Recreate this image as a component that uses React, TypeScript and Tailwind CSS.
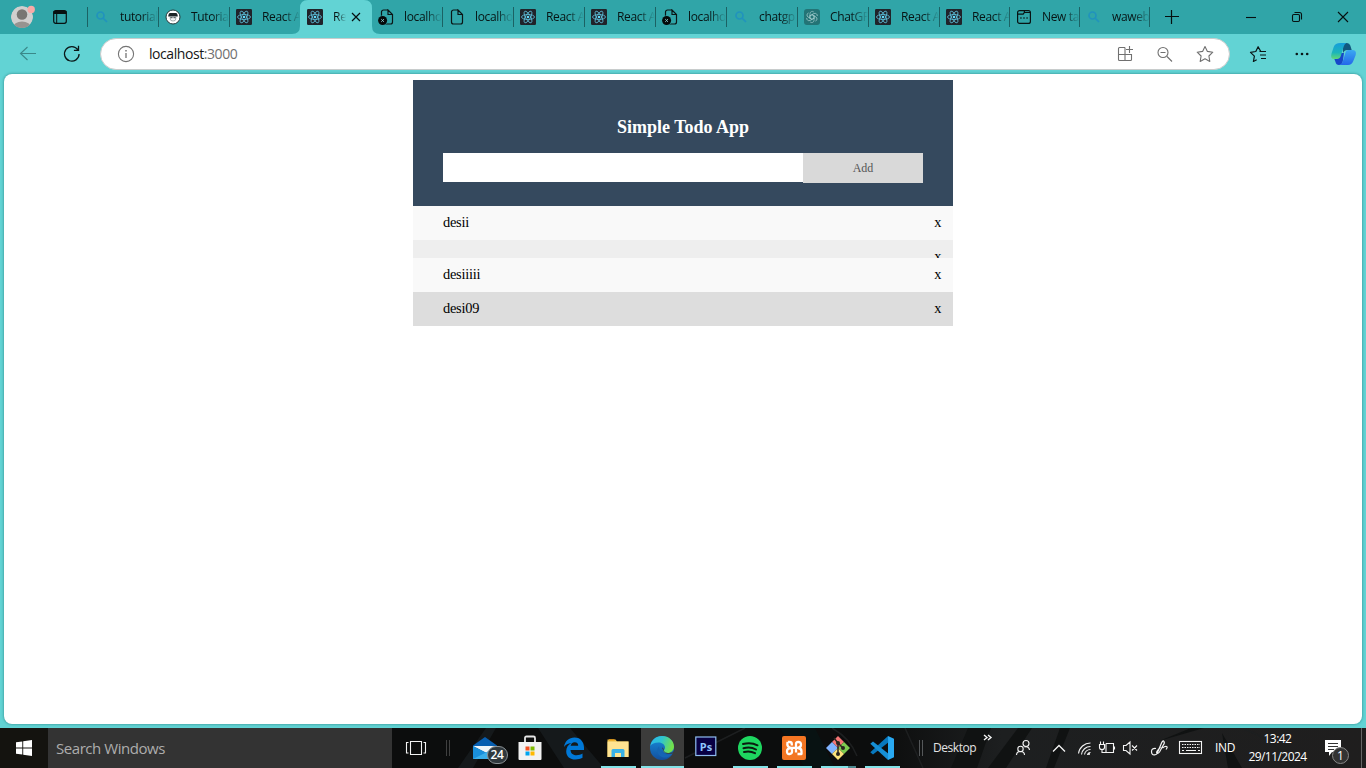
import React from "react";

type Fav = "search" | "avatar" | "react" | "error" | "file" | "gpt" | "newtab";

const tabs: { icon: Fav; title: string; active?: boolean; width?: string }[] = [
  { icon: "search", title: "tutorial" },
  { icon: "avatar", title: "Tutoria" },
  { icon: "react", title: "React A" },
  { icon: "react", title: "Re", active: true },
  { icon: "error", title: "localho" },
  { icon: "file", title: "localho" },
  { icon: "react", title: "React A" },
  { icon: "react", title: "React A" },
  { icon: "error", title: "localho" },
  { icon: "search", title: "chatgp" },
  { icon: "gpt", title: "ChatGP" },
  { icon: "react", title: "React A" },
  { icon: "react", title: "React A", width: "w-[70px]" },
  { icon: "newtab", title: "New ta", width: "w-[70px]" },
  { icon: "search", title: "waweb", width: "w-[70px]" },
];

function Favicon({ kind }: { kind: Fav }) {
  const file = (
    <path d="M9 1H4.500A2 2 0 0 0 2.500 3v10a2 2 0 0 0 2 2h7a2 2 0 0 0 2-2V5.500L9 1v4.500h4.500" fill="none" stroke="#0b1616" strokeWidth="1.200" />
  );
  return (
    <svg className="size-4 shrink-0" viewBox="0 0 16 16">
      {kind === "search" && (
        <g fill="none" stroke="#2193bd" strokeWidth="1.700">
          <circle cx="6.500" cy="6.500" r="3.500" />
          <path d="m9 9 4 4" />
        </g>
      )}
      {kind === "avatar" && (
        <>
          <circle cx="8" cy="8" r="7" fill="#fff" stroke="#22383a" strokeWidth="1" />
          <path d="M3.200 7.500Q3.500 4 5 4h6q1.500 0 1.800 3.500z" fill="#1d2426" />
          <path d="M5.200 7.800V10q0 2 2.800 2t2.800-2V7.800z" fill="#f4f6f6" stroke="#718082" strokeWidth=".6" />
          <path d="M5.500 8.700h2m1 0h2" stroke="#1d2426" strokeWidth=".8" />
        </>
      )}
      {kind === "react" && (
        <>
          <rect width="16" height="16" rx="1.200" fill="#20232a" />
          <g fill="none" stroke="#5bb9d4" strokeWidth=".85">
            <ellipse cx="8" cy="8" rx="6.500" ry="2.500" />
            <ellipse cx="8" cy="8" rx="6.500" ry="2.500" transform="rotate(60 8 8)" />
            <ellipse cx="8" cy="8" rx="6.500" ry="2.500" transform="rotate(120 8 8)" />
          </g>
          <circle cx="8" cy="8" r="1.300" fill="#61dafb" />
        </>
      )}
      {kind === "file" && file}
      {kind === "error" && (
        <>
          <g transform="translate(1 0)">{file}</g>
          <circle cx="4.600" cy="11.500" r="5" fill="#30a5a8" />
          <circle cx="4.600" cy="11.500" r="4.500" fill="#050909" />
          <path d="m3.200 10.100 2.800 2.800m0-2.800-2.800 2.800" stroke="#8ccccd" strokeWidth=".9" />
        </>
      )}
      {kind === "gpt" && (
        <>
          <rect width="16" height="16" rx="3" fill="#237476" />
          <g fill="none" stroke="#9cc8c9" strokeWidth=".75">
            {[0, 60, 120, 180, 240, 300].map((a) => (
              <path key={a} transform={`rotate(${a} 8 8)`} d="M6 6.800V4.500a2.300 2.300 0 0 1 3.800-1.500M6 6.800l2-1.150 2.800 1.600" />
            ))}
          </g>
        </>
      )}
      {kind === "newtab" && (
        <g fill="none" stroke="#081313" strokeWidth="1.200">
          <rect x="1.600" y="1.600" width="12.800" height="12.800" rx="2" />
          <path d="M1.600 5.200h5.600l1.200-1.700h6M4 9h1.800m1.300 0h1.800m1.300 0h1.800" />
          <path d="M8.400 1.800v1.700" />
        </g>
      )}
    </svg>
  );
}

function TabStrip() {
  return (
    <div className="flex h-[34px] bg-[#30a5a8] text-[#071414]">
      <div className="flex w-[88px] shrink-0 items-center pl-[11px]">
        <svg className="h-[24px] w-[25px]" viewBox="0 0 25 24">
          <defs>
            <clipPath id="face"><circle cx="11" cy="12" r="11" /></clipPath>
          </defs>
          <g clipPath="url(#face)">
            <circle cx="11" cy="12" r="11" fill="#d1cfce" />
            <circle cx="11" cy="9.500" r="5.300" fill="#797673" />
            <ellipse cx="11" cy="22.500" rx="9" ry="6" fill="#979390" />
          </g>
          <circle cx="20.200" cy="4.400" r="3.700" fill="#f9aaa7" />
        </svg>
        <svg className="ml-[16px] size-4" viewBox="0 0 16 16">
          <rect x="1.700" y="1.700" width="12.600" height="12.600" rx="2" fill="none" stroke="#071010" strokeWidth="1.200" />
          <path d="M1.500 2h13v3h-13z" fill="#071010" />
          <path d="M4.700 5v9" stroke="#071010" />
        </svg>
      </div>
      <div className="-ml-px flex">
        {tabs.map((t, i) => (
          <div
            key={i}
            className={`relative flex h-[34px] items-center pl-[7px] ${t.active ? "z-10" : ""} ${t.width ?? "w-[71px]"}`}
          >
            {t.active && (
              <svg className="absolute top-0 -left-2 h-[34px] w-[88px]" viewBox="0 0 88 34">
                <path d="M0 34Q8 34 8 26V8Q8 0 16 0H72Q80 0 80 8V26Q80 34 88 34Z" fill="#62d3d4" />
              </svg>
            )}
            {i !== 3 && i !== 4 && <span className="absolute top-[7px] left-0 h-5 w-px bg-[#1b6264]" />}
            <span className="relative flex"><Favicon kind={t.icon} /></span>
            <span
              className={
                t.active
                  ? "relative ml-[10px] w-[15px] shrink-0 mask-[linear-gradient(to_right,#000_4px,transparent_13px)] font-['Open_Sans',sans-serif] text-[12px] leading-4 tracking-[-0.2px] whitespace-nowrap"
                  : "ml-[10px] shrink-0 mask-[linear-gradient(to_right,#000_21px,transparent_38px)] pr-px font-['Open_Sans',sans-serif] text-[12px] leading-4 tracking-[-0.35px] whitespace-nowrap"
              }
            >
              {t.title}
            </span>
            {t.active && (
              <svg className="relative ml-[3px] size-[10px] shrink-0" viewBox="0 0 10 10">
                <path d="m1 1 8 8m0-8L1 9" stroke="#061010" strokeWidth="1.200" />
              </svg>
            )}
          </div>
        ))}
        <span className="mt-[7px] h-5 w-px bg-[#1b6264]" />
      </div>
      <svg className="mt-[10px] ml-[15px] size-[14px]" viewBox="0 0 14 14">
        <path d="M6.500 0v14M0 6.500h14" stroke="#061010" strokeWidth="1.200" />
      </svg>
      <svg className="ml-auto h-[34px] w-[138px]" viewBox="1228 0 138 34" fill="none" stroke="#061010" strokeWidth="1.100">
        <path d="M1246 17.500h10" />
        <rect x="1292.500" y="14.500" width="7" height="7" rx="1.200" />
        <path d="M1294.500 12.500h5q2 0 2 2v5" />
        <path d="m1338 12 10 10m0-10-10 10" />
      </svg>
    </div>
  );
}

function Toolbar() {
  return (
    <div className="flex h-10 items-center">
      <svg className="h-10 w-[100px]" viewBox="0 34 100 40" fill="none">
        <path d="M36 53.500H20.500m7-6.500-7 6.500 7 6.500" stroke="#3a8889" strokeWidth="1.100" />
        <path d="M77.800 49.700a7.300 7.300 0 1 0 1.300 4.300M78.500 45.800v4.500h-4.600" stroke="#0b1818" strokeWidth="1.300" />
      </svg>
      <div className="flex h-8 w-[1130px] items-center rounded-full border border-[#c8cccc] bg-white">
        <svg className="ml-[16px] size-[18px]" viewBox="0 0 18 18" fill="none" stroke="#747474">
          <circle cx="9" cy="9" r="7.600" strokeWidth="1.100" />
          <path d="M9 8v5" strokeWidth="1.300" />
          <path d="M9 5v1.400" strokeWidth="1.500" />
        </svg>
        <div className="ml-[14px] font-['Open_Sans',sans-serif] text-[14px] leading-5 tracking-[-0.43px] text-[#707070]">
          <span className="text-[#161616]">localhost</span>:3000
        </div>
        <svg className="ml-auto h-[30px] w-[129px]" viewBox="1100 39 129 30" fill="none" stroke="#707070" strokeWidth="1.100">
          <path d="M1125 47.500h-5.500q-1 0-1 1v11q0 1 1 1h11q1 0 1-1V54.500h-13M1125 47.500v13M1129.500 46v7M1126 49.500h7" />
          <circle cx="1163" cy="52.500" r="5" />
          <path d="M1160.500 52.500h5m1.500 4 5 5" />
          <path d="m1205 46.500 2.400 4.900 5.400.8-3.900 3.800.9 5.400-4.800-2.600-4.800 2.600.9-5.400-3.900-3.800 5.400-.8z" strokeLinejoin="round" />
        </svg>
      </div>
      <svg className="h-10 w-[136px]" viewBox="1230 34 136 40" fill="none">
        <path d="M1265.500 51.500h-4.700l-2.700-4.800-2.300 4.800-5.300.8 3.900 3.900-1 5.300 3.300-1.700" stroke="#091616" strokeWidth="1.200" strokeLinejoin="round" />
        <path d="M1259.500 51.500h6.500m-6 3.500h6m-5 3.500h5" stroke="#091616" strokeWidth="1.200" />
        <g fill="#091616">
          <circle cx="1296.800" cy="54" r="1.300" />
          <circle cx="1302" cy="54" r="1.300" />
          <circle cx="1307.200" cy="54" r="1.300" />
        </g>
        <defs>
          <linearGradient id="cpa" x1="0" y1="0" x2="0" y2="1">
            <stop offset="0" stopColor="#159ddc" />
            <stop offset=".6" stopColor="#1cb5ba" />
            <stop offset="1" stopColor="#5fd878" />
          </linearGradient>
          <linearGradient id="cpb" x1="0" y1="0" x2="0" y2="1">
            <stop offset="0" stopColor="#3aa9f2" />
            <stop offset="1" stopColor="#2466ea" />
          </linearGradient>
        </defs>
        <path d="M1342 43h5q2.500 0 3.300 2.500l1.400 4.500h-4.500q-3 0-4 3z" fill="#12587f" />
        <path d="M1338 53h6l-1 7q-.5 5-4 5-3 0-3.500-3l-1.500-4z" fill="#1747c9" />
        <path d="M1340.500 43h6q-2 .7-2.800 3.500l-2.900 9.500q-1 3-3.800 3h-2.500q-4.500 0-3-5.500l2.200-6.500q1.300-4 6.800-4z" fill="url(#cpa)" />
        <path d="M1348.500 50h3.500q5 0 3.700 5l-2.400 6q-1.500 4-5.300 4h-8.500q2.500-.6 3.300-3.500l2.500-8.500q.8-3 3.200-3z" fill="url(#cpb)" />
      </svg>
    </div>
  );
}

const todos = [
  { text: "desii", row: "h-[34px] bg-[#f9f9f9]" },
  { text: "", row: "h-[18px] bg-[#eeeeee]" },
  { text: "desiiiii", row: "h-[34px] bg-[#f9f9f9]" },
  { text: "desi09", row: "h-[34px] bg-[#dddddd]" },
];

function TodoApp() {
  return (
    <div className="mx-auto w-[540px] pt-1.5 font-['Liberation_Serif',serif]">
      <div className="h-[126px] bg-[#35495e] px-[30px] pt-[37px]">
        <h2 className="text-center text-[18px] leading-5 font-bold text-white">Simple Todo App</h2>
        <div className="mt-4 flex">
          <input aria-label="Todo" className="h-[29px] w-[360px] bg-white px-2 outline-none" />
          <button className="h-[30px] w-[120px] bg-[#d9d9d9] text-[12px] leading-[30px] text-[#555555]">Add</button>
        </div>
      </div>
      <ul>
        {todos.map((t, i) => (
          <li key={i} className={`flex items-start justify-between overflow-hidden pr-[11.500px] pl-[30px] text-[14.400px] leading-[32px] text-black ${t.row}`}>
            <span className="tracking-[-0.25px]">{t.text}</span>
            <span>x</span>
          </li>
        ))}
      </ul>
    </div>
  );
}

const apps: { id: string; bar?: string; active?: boolean }[] = [
  { id: "mail" },
  { id: "store" },
  { id: "edge-old" },
  { id: "explorer", bar: "w-[35px]" },
  { id: "edge", bar: "w-[43px]", active: true },
  { id: "ps" },
  { id: "spotify", bar: "w-[35px]" },
  { id: "xampp", bar: "w-[35px]" },
  { id: "git", bar: "w-[35px]" },
  { id: "code", bar: "w-[35px]" },
];

function AppIcon({ id }: { id: string }) {
  return (
    <svg className="size-6 overflow-visible" viewBox="0 0 24 24">
      {id === "mail" && (
        <g transform="translate(-1 0)">
          <path d="M0 9.500 12 1l12 8.500V12H0z" fill="#075eb0" />
          <path d="M0 10h24L13 17z" fill="#f1f5f8" />
          <path d="M0 10v13h24L13 16.500z" fill="#1a8fdb" />
          <path d="m0 23 13-6.500L24 10v13z" fill="#3aaeea" />
        </g>
      )}
      {id === "store" && (
        <>
          <path d="M7 7V2q0-1.500 1.500-1.500h7Q17 .5 17 2v5" fill="none" stroke="#e5e5e5" strokeWidth="1.800" />
          <path d="M.5 6h23v17q0 1-1 1H1.500q-1 0-1-1z" fill="#f2f2f2" />
          <path d="M7.500 10.500h4v4h-4z" fill="#f25022" />
          <path d="M12.500 10.500h4v4h-4z" fill="#7fba00" />
          <path d="M7.500 15.500h4v4h-4z" fill="#00a4ef" />
          <path d="M12.500 15.500h4v4h-4z" fill="#ffb900" />
        </>
      )}
      {id === "edge-old" && (
        <path d="M2 11C3 5 7 1.500 12.500 1.500 19 1.500 22 6.500 22 11.500V14H8.500c.3 4 3 5.200 6 5.200 2.300 0 4.500-.7 6-1.700v4.300c-2 1.200-4.500 1.700-7 1.700-5.500 0-9.300-3-9.300-8.300 0-3.700 2-6.700 5.200-8.300C6 7.200 3.500 8.500 2 11zm6.600-1.200h7.600c0-2.200-1-3.600-3.500-3.600-2.300 0-3.700 1.500-4.100 3.600z" fill="#0078d7" />
      )}
      {id === "explorer" && (
        <>
          <path d="M1.500 3.500h8l1.500 2h11.500V21h-21z" fill="#e9bb45" />
          <path d="M1.500 5.500h21V21h-21z" fill="#ffe391" />
          <path d="M3 3.300h5.500v1.200H3z" fill="#f4a116" />
          <path d="M5.500 14.500q0-1.500 1.500-1.500h10q1.500 0 1.500 1.500V21H15v-4H9v4H5.500z" fill="#39b1e7" />
        </>
      )}
      {id === "edge" && (
        <>
          <defs>
            <linearGradient id="ea" x1="0" y1="0" x2="1" y2=".3">
              <stop offset="0" stopColor="#2ab5ef" />
              <stop offset=".5" stopColor="#2fc5cf" />
              <stop offset="1" stopColor="#72e04c" />
            </linearGradient>
            <linearGradient id="eb" x1="0" y1="0" x2="0" y2="1">
              <stop offset="0" stopColor="#188edc" />
              <stop offset="1" stopColor="#124f9e" />
            </linearGradient>
          </defs>
          <circle cx="12" cy="12" r="12" fill="url(#eb)" />
          <path d="M.3 10C1.200 4 6 0 12 0c7 0 12 5 12 10.500 0 4-3 6.500-6.500 6.500-2.500 0-4-1-4-2s1.500-1.500 1.500-3.500c0-2.500-2.500-5-6.500-5C4.500 6.500 1.500 8 .3 10z" fill="url(#ea)" />
          <path d="M9 10.500c-1.500 1.500-2 3.500-1.500 5.500 1 4 5 6 9 5.500 2.500-.5 4.500-2 6-4.200-3 1.700-6.500 1.700-9 .2-2.500-1.500-4.500-4-4.500-7z" fill="#1565b4" />
          <path d="M13.500 13c-1 2.500 2 6 9.500 4.500l2-1v-2q-2.500 3-7 2.500c-2.500 0-4-1-4.500-4z" fill="#3c3c3b" />
          <path d="M12 11.300q2 1 1.800 3-1.600-.5-1.800-3z" fill="#3c3c3b" />
        </>
      )}
      {id === "ps" && (
        <>
          <rect x="1.800" y="1" width="20" height="18.500" fill="#080044" stroke="#8fbdf0" strokeWidth="1.200" />
          <text x="12" y="14.500" textAnchor="middle" fontSize="11" fontWeight="700" fontFamily="Open Sans, sans-serif" fill="#8fc6ff">Ps</text>
        </>
      )}
      {id === "spotify" && (
        <>
          <circle cx="12" cy="12" r="12" fill="#1ed760" />
          <path d="M5 8q8-2.200 14.500 1.300M5.500 12.200q7-1.900 12.500 1.300M6 16q6-1.500 11 1.200" fill="none" stroke="#0b1b10" strokeWidth="2" strokeLinecap="round" />
        </>
      )}
      {id === "xampp" && (
        <>
          <rect width="24" height="24" rx="2" fill="#f37623" />
          <path d="M9.800 9.500V8Q9.800 6 7.500 6H5.800M5.500 6q-1 5.500 3.500 5.800h6.500Q19 11.500 19 8.700T16.300 6 14 8v8.500M9.500 12Q5 12.200 5 15.300T7.500 18 10 15.800V12M16 12q3.500.3 3.500 3.500V18h-4" fill="none" stroke="#fff" strokeWidth="2.300" strokeLinejoin="round" />
        </>
      )}
      {id === "git" && (
        <>
          <path d="m12 0 6 6-6 6-6-6z" fill="#f47575" />
          <path d="m6 6 6 6-6 6-6-6z" fill="#80b3ff" />
          <path d="m18 6 6 6-6 6-6-6z" fill="#7dcb50" />
          <path d="m12 12 6 6-6 6-6-6z" fill="#fbe27b" />
          <path d="m8 2 4 5v11m0-11 5 5" fill="none" stroke="#29251f" strokeWidth="1.500" />
          <g fill="#29251f"><circle cx="12" cy="7" r="2" /><circle cx="17" cy="12" r="2" /><circle cx="12" cy="18" r="2" /></g>
        </>
      )}
      {id === "code" && (
        <>
          <path d="m18 0 6 2.800v18.400L18 24z" fill="#29a9f2" />
          <path d="m18 0 .2 6.500L3 18.500.3 16.300z" fill="#0878bd" />
          <path d="m18 24 .2-6.500L3 5.500.3 7.700z" fill="#168fd5" />
        </>
      )}
    </svg>
  );
}

function Taskbar() {
  return (
    <div className="relative flex h-10 bg-[#0c0d0d] font-['Open_Sans',sans-serif] text-white">
      <svg className="absolute inset-0 h-10 w-full" viewBox="0 0 1366 40" preserveAspectRatio="none">
        <defs>
          <linearGradient id="wall" x1="0" x2="1">
            <stop offset="0" stopColor="#0c0d0d" />
            <stop offset=".25" stopColor="#1d1f20" />
            <stop offset="1" stopColor="#1f1e1e" />
          </linearGradient>
        </defs>
        <path d="M0 0h48v40H0z" fill="#14130f" />
        <path d="M880 0h486v40H880z" fill="url(#wall)" />
        <path d="M538 0h32l34 40h-40zM458 40l28-40h10l-23 40z" fill="#15191b" />
        <path d="M780 0h35l20 40h-30z" fill="#081212" />
        <path d="M968 0h23l-14 40h-26zM1018 0h14l-26 40h-18zM1060 0l-14 40h8l16-40zM1222 5l6 35h14zM1191 0l-32 13 45-13z" fill="#101212" />
        <path d="M685 30l60-30M905 0l18 40M1240 0q35 10 52 40M832 0q18 10 25 28" fill="none" stroke="#1d1f20" strokeWidth="1.500" />
      </svg>
      <div className="relative flex w-12 items-center justify-center">
        <svg className="size-4" viewBox="0 0 16 16" fill="#fff">
          <path d="m0 2.300 6.300-.9v6.100H0zM7.200 1.200 16 0v7.500H7.200zM0 8.400h6.300v6.200L0 13.700zM7.200 8.400H16V16l-8.800-1.300z" />
        </svg>
      </div>
      <div className="relative flex w-[344px] items-center bg-[#333333] pl-2 text-[15px] tracking-[-0.45px] text-[#adadad]">Search Windows</div>
      <svg className="relative h-10 w-[72px]" viewBox="392 728 72 40" fill="none">
        <path d="M410.500 741.500h11v13h-11zM408.500 742.500h-2v10.500h2M423.500 742.500h2v10.500h-2" stroke="#f3f3f3" strokeWidth="1.100" />
        <path d="M446.500 740v16m3-16v16" stroke="#404040" />
      </svg>
      <div className="relative flex">
        {apps.map((a) => (
          <div key={a.id} className="flex h-10 w-11 justify-center">
            <div className={`relative flex h-10 w-[43px] shrink-0 flex-col items-center pt-2 ${a.active ? "bg-[#3c3c3b]" : ""}`}>
              <AppIcon id={a.id} />
              {a.bar && <span className={`mt-auto h-0.5 bg-[#83e2e7] ${a.bar}`} />}
              {a.id === "git" && <span className="absolute right-1 bottom-0 h-0.5 w-2 bg-[#4e8990]" />}
              {a.id === "mail" && (
                <span className="absolute top-[18px] left-[22px] flex h-[18px] w-[21px] items-center justify-center rounded-full border border-[#8a9194] bg-[#30383d] text-[12px] font-semibold tracking-[-0.4px]">24</span>
              )}
            </div>
          </div>
        ))}
      </div>
      <div className="relative flex flex-1">
        <svg className="h-10 w-[28px] shrink-0" viewBox="904 728 28 40">
          <path d="M919.500 740v16m3-16v16" stroke="#55585a" />
        </svg>
        <span className="ml-px w-[50px] self-center text-[12px] tracking-[-0.45px] text-[#e3e3e3]">Desktop</span>
        <svg className="h-10 w-[226px] shrink-0" viewBox="983 728 226 40" fill="none" stroke="#f4f4f4" strokeWidth="1.100">
          <path d="m984 735 3 2.500-3 2.500m4-5 3 2.500-3 2.500" strokeWidth="1.400" />
          <circle cx="1026" cy="743.500" r="3" />
          <circle cx="1020.500" cy="749" r="2.700" />
          <path d="M1016.500 755q0-3.500 4-3.500t4 3.500M1024.500 747q4.500-1 5 3" />
          <path d="m1053 751.500 6-6 6 6" strokeWidth="1.300" />
          <path d="M1078.500 753.500a12 12 0 0 1 12-10.500M1081.500 754.500a9 9 0 0 1 9-8M1084.500 754.500a6 6 0 0 1 6-5" />
          <path d="M1087.500 755a3 3 0 0 1 3-2.500" />
          <circle cx="1089" cy="754" r="1" fill="#fff" stroke="none" />
          <path d="M1106 743.500h7.500v9h-7.500M1114.500 746.500v3M1099.500 744.500h5v3q0 2-2.500 2t-2.500-2zM1100.500 744.500v-3m3 3v-3M1102 749.500v3h4v-9" />
          <path d="M1123.500 745.500h2.500l4-3.500v12l-4-3.500h-2.500zM1132 745.500l5 5m0-5-5 5" />
          <path d="M1156 748.500q-4.500-.5-4.500 3t3 3.300 3.500-3.300l3.500-8.500q1.500-3 2.500-1.500t-1 4l-3.500 6.500q-1.500 2-2.500 1.300t.5-2.800l3-3.500M1162.500 748q2.500-2 4-1.500t-.5 3" strokeWidth="1.200" />
          <rect x="1179.500" y="741.500" width="22" height="12" />
          <path d="M1182 744.500h18m-18 3h18" strokeDasharray="1.500 1" />
          <path d="M1182 750.500h2m2 0h10m2 0h2" />
        </svg>
        <span className="w-[31px] self-center pl-[6px] text-[12px] tracking-[-0.3px]">IND</span>
        <div className="ml-[7px] flex w-[61px] flex-col items-center pt-[2px] text-[12px] leading-[18px] tracking-[-0.55px] whitespace-nowrap">
          <span>13:42</span>
          <span>29/11/2024</span>
        </div>
        <div className="relative ml-auto h-10 w-[44px]">
          <svg className="h-10 w-[44px]" viewBox="1322 728 44 40">
            <path d="M1325 740h16v12h-9l-3 4v-4h-4z" fill="#fff" />
            <path d="M1328 743.500h10m-10 3h10m-10 3h6" stroke="#333" />
            <path d="M1361.500 728v40" stroke="#656565" />
          </svg>
          <span className="absolute top-[19px] left-[10px] flex size-[17px] items-center justify-center rounded-full border border-[#888] bg-[#333] text-[12px]">1</span>
        </div>
      </div>
    </div>
  );
}

export default function App() {
  return (
    <div className="flex h-[768px] w-[1366px] flex-col overflow-hidden bg-[#62d3d4]">
      <TabStrip />
      <Toolbar />
      <main className="mx-1 mb-1 h-[650px] rounded-lg bg-white shadow-[0_0_3px_#2b8587]">
        <TodoApp />
      </main>
      <Taskbar />
    </div>
  );
}
